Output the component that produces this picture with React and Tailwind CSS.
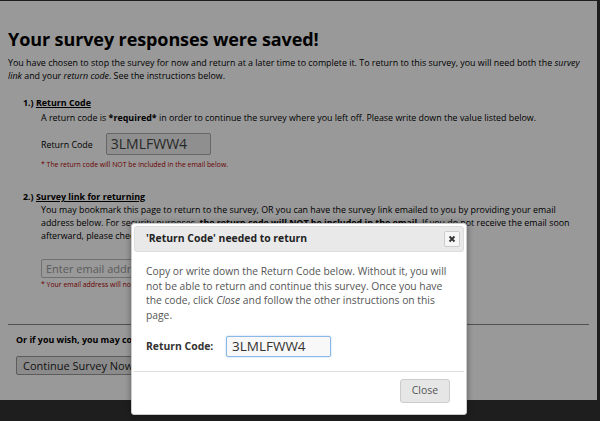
import React from "react";

const font = { fontFamily: '"Open Sans", "Liberation Sans", sans-serif' };

export default function App() {
  return (
    <div className="relative w-[600px] h-[421px] overflow-hidden bg-[#333]" style={font}>
      {/* page */}
      <div className="mt-px w-[597px] h-[399px] bg-white text-black px-2">
        <h1 className="pt-[26px] text-[18px] font-bold leading-[24px] tracking-[-0.1px]">Your survey responses were saved!</h1>
        <p className="mt-[5px] text-[8.9px] leading-[13px]">
          You have chosen to stop the survey for now and return at a later time to complete it. To return to this survey, you will need both the <i>survey link</i> and your <i>return code</i>. See the instructions below.
        </p>

        <div className="mt-[14px] pl-[15px] text-[8.9px] leading-[13px]">
          <div className="font-bold"><span>1.) </span><span className="underline">Return Code</span></div>
          <div className="pl-[18px] mt-[2px]">
            A return code is <b>*required*</b> in order to continue the survey where you left off. Please write down the value listed below.
          </div>
          <div className="pl-[18px] mt-[9px] flex items-center gap-[13px]">
            <span>Return Code</span>
            <div className="w-[105px] h-[22px] border border-[#aaa] rounded-[2px] bg-[#eee] text-[#444] text-[14px] leading-[20px] pl-[4px]">3LMLFWW4</div>
          </div>
          <div className="pl-[18px] mt-[5px] text-[6.9px] leading-[10px] text-[#b00000]">* The return code will NOT be included in the email below.</div>

          <div className="mt-[20px] font-bold"><span>2.) </span><span className="underline">Survey link for returning</span></div>
          <div className="pl-[18px]">
            You may bookmark this page to return to the survey, OR you can have the survey link emailed to you by providing your email address below. For security purposes, <b>the return code will NOT be included in the email</b>. If you do not receive the email soon afterward, please check your Junk Email folder.
          </div>
          <div className="pl-[18px] mt-[17px] flex items-center gap-2">
            <div className="w-[180px] h-[19px] border border-[#bbb] rounded-[2px] bg-white text-[#999] text-[11px] leading-[17px] pl-[4px]">Enter email address</div>
            <div className="h-[19px] border border-[#aaa] rounded-[2px] bg-[#eee] text-[10px] leading-[17px] px-2">Send Survey Link</div>
          </div>
          <div className="pl-[18px] mt-[2px] text-[6.9px] leading-[10px] text-[#b00000]">* Your email address will not be associated with your survey responses.</div>
        </div>

        <div className="mt-[34px] border-t border-[#888]" />
        <div className="pl-2 mt-[8px] text-[8.9px] leading-[13px] font-bold">Or if you wish, you may continue the survey right now.</div>
        <div className="pl-2 mt-[6px]">
          <div className="inline-block h-[19px] border border-[#999] rounded-[2px] bg-[#e8e8e8] text-[#222] text-[11px] leading-[17px] px-[6px]">Continue Survey Now</div>
        </div>
      </div>

      {/* overlay */}
      <div className="absolute inset-0 bg-black/40" />

      {/* dialog */}
      <div className="absolute left-[131px] top-[223px] w-[336px] h-[192px] bg-white border border-[#ccc] rounded-[3px] p-[2px] shadow-[0_0_6px_rgba(0,0,0,0.4)]">
        <div className="h-[26px] bg-[#e9e9e9] border border-[#ddd] rounded-[3px] flex items-center justify-between pl-[11px] pr-[3px]">
          <span className="text-[10.4px] font-bold text-[#222]">'Return Code' needed to return</span>
          <span className="w-[16px] h-[16px] border border-[#ccc] rounded-[2px] bg-[#f6f6f6] flex items-center justify-center">
            <svg width="8" height="8" viewBox="0 0 8 8"><path d="M1.5 1.5 L6.5 6.5 M6.5 1.5 L1.5 6.5" stroke="#333" strokeWidth="1.8" /></svg>
          </span>
        </div>
        <div className="px-[12px] pt-[12px] text-[10.3px] leading-[14.7px] text-[#555]">
          Copy or write down the Return Code below. Without it, you will not be able to return and continue this survey. Once you have the code, click <i>Close</i> and follow the other instructions on this page.
        </div>
        <div className="px-[12px] mt-[13px] flex items-center">
          <span className="w-[80px] text-[10.4px] font-bold text-[#333]">Return Code:</span>
          <div className="w-[105px] h-[21px] border border-[#8cb8e8] rounded-[2px] bg-[#f8f8f8] text-[#333] text-[13.5px] leading-[19px] pl-[5px] shadow-[0_0_2px_rgba(102,175,233,0.6)]">3LMLFWW4</div>
        </div>
        <div className="mt-[14px] border-t border-[#ddd]" />
        <div className="flex justify-end pr-[14px] pt-[7px]">
          <div className="w-[50px] h-[24px] border border-[#ccc] rounded-[3px] bg-[#e6e6e6] text-[#555] text-[10.5px] flex items-center justify-center">Close</div>
        </div>
      </div>
    </div>
  );
}
